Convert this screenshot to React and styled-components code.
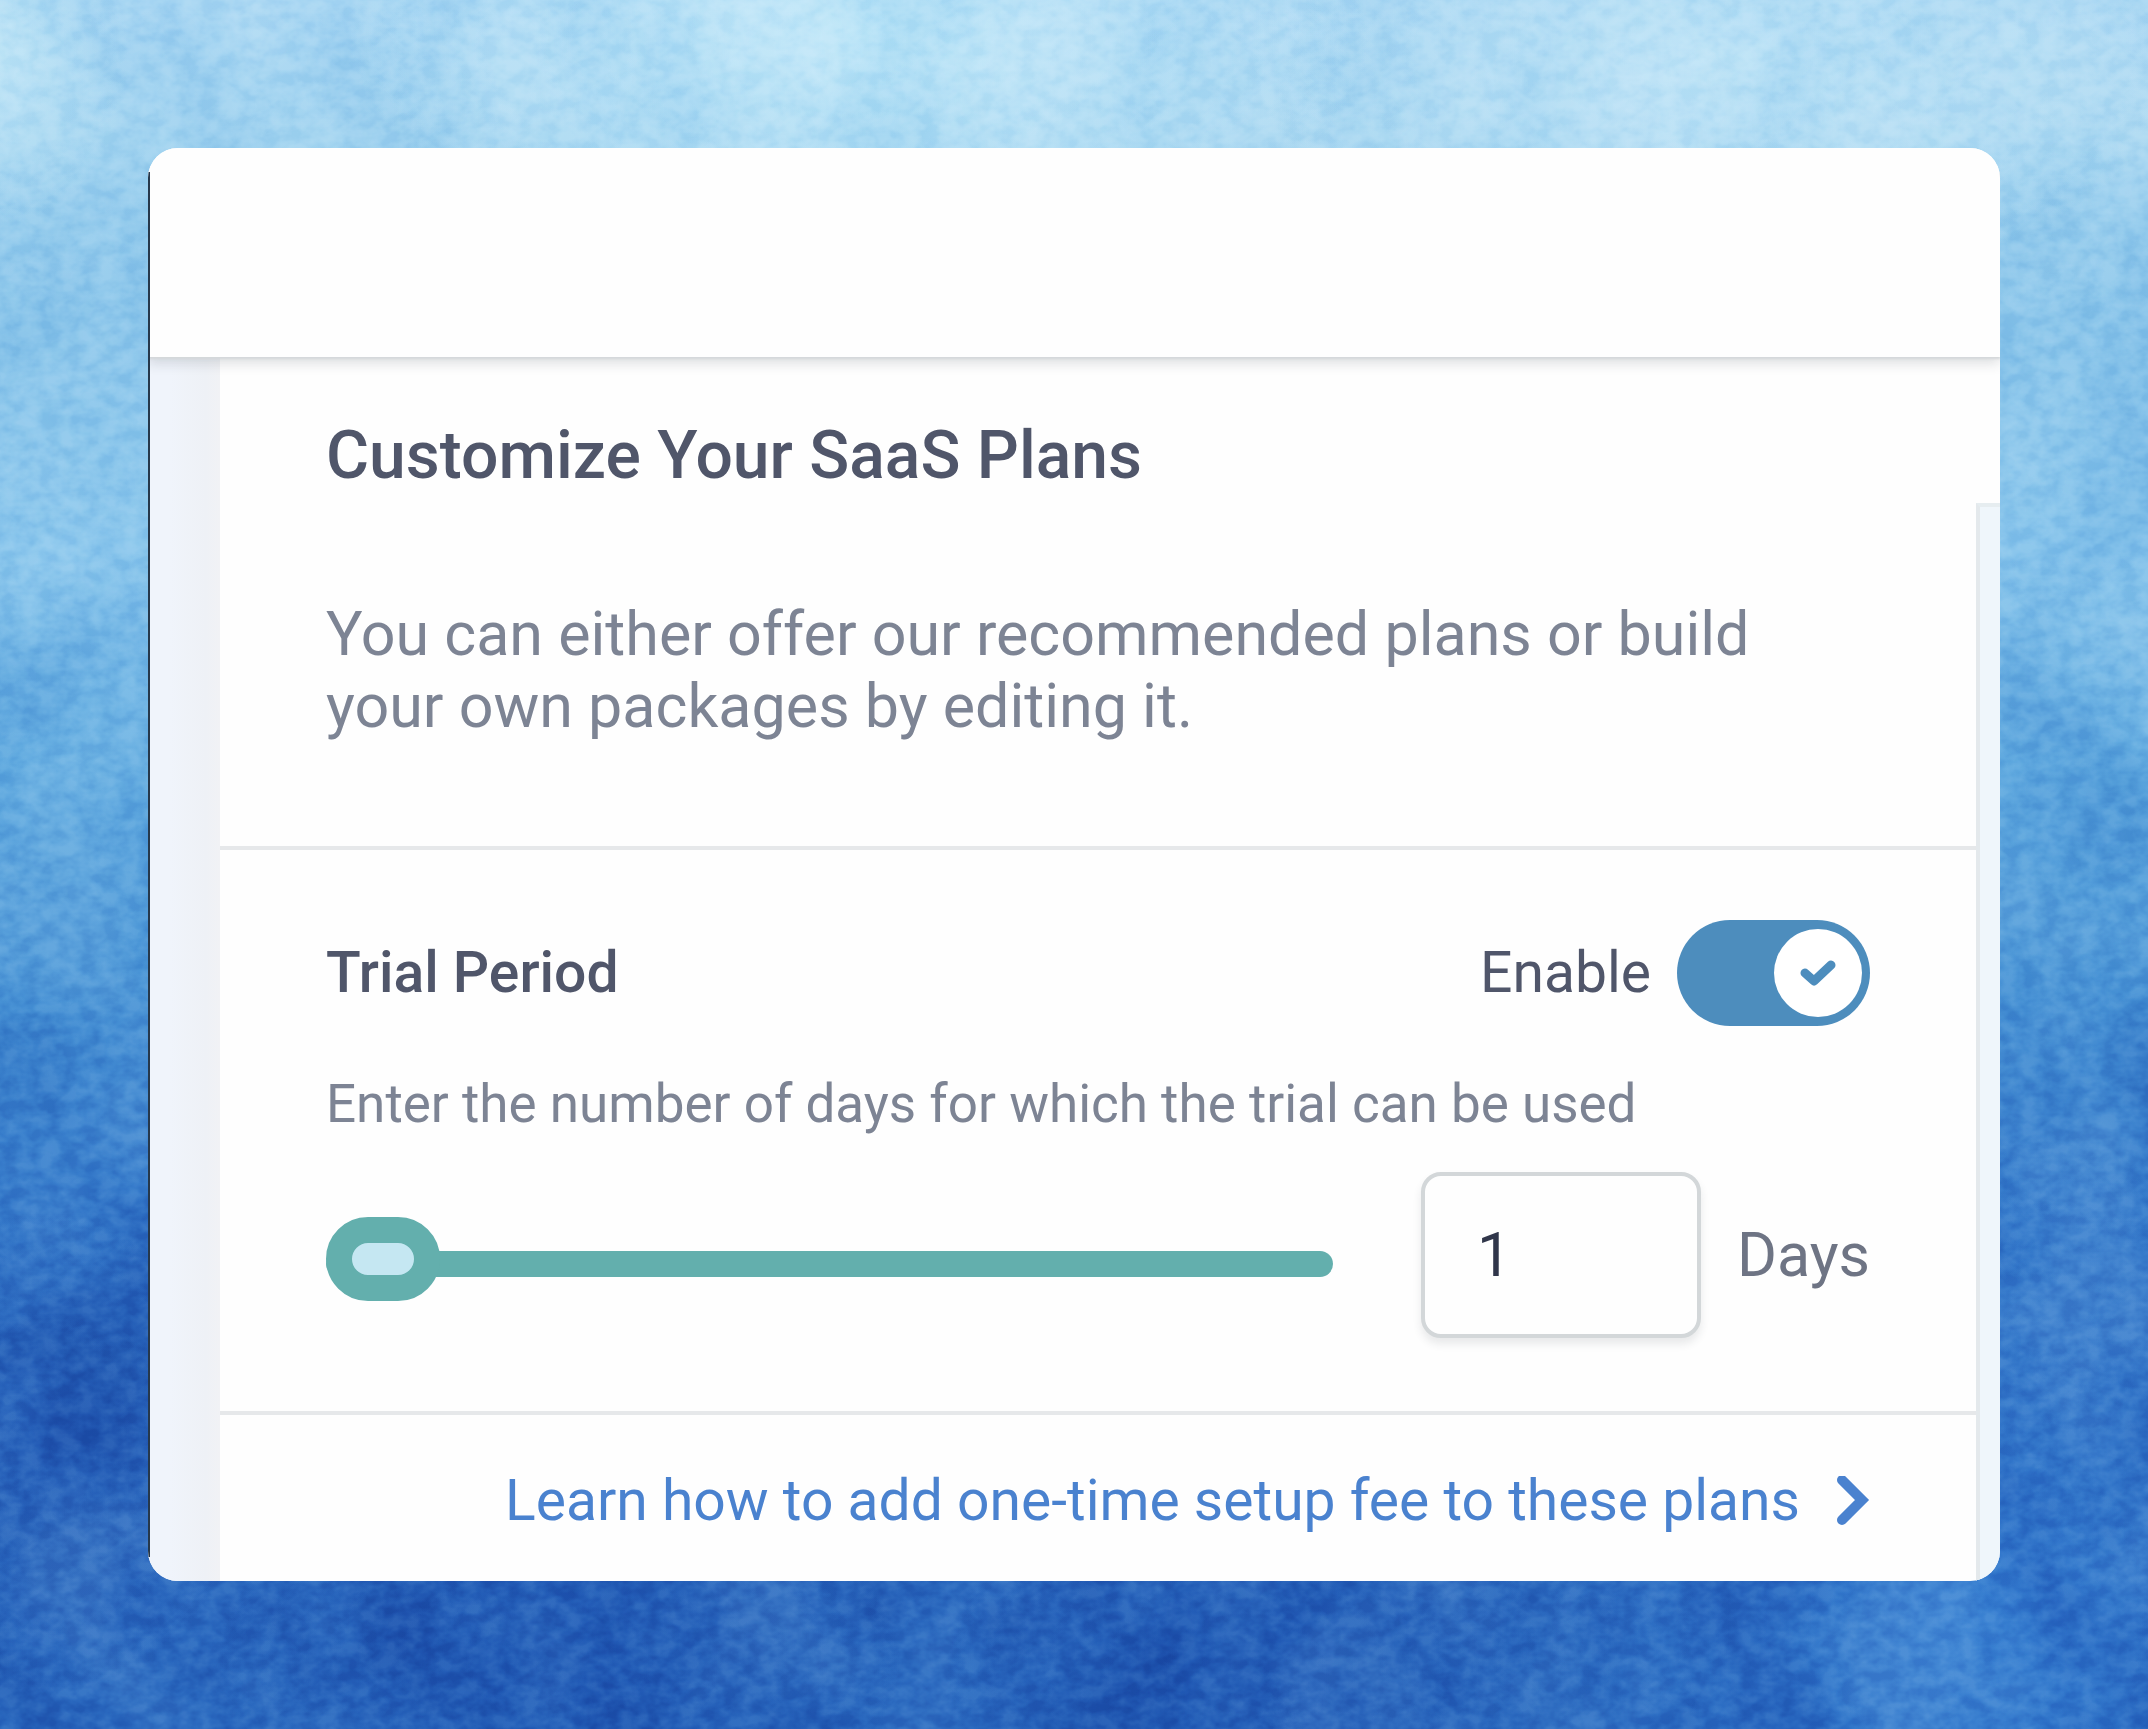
import React, { useState } from 'react';
import styled, { createGlobalStyle } from 'styled-components';

const GlobalStyle = createGlobalStyle`
  *, *::before, *::after {
    box-sizing: border-box;
  }

  body {
    margin: 0;
    font-family: Roboto, 'Liberation Sans', sans-serif;
    color: #50566a;
  }

  h1, h2, p {
    margin: 0;
  }
`;

// Backdrop
const Page = styled.div`
  position: relative;
  isolation: isolate;
  min-height: 100vh;
  padding: 148px 148px 149px;
  background:
    radial-gradient(ellipse 24% 14% at 40% 2%, rgba(196, 234, 249, 0.8), transparent),
    radial-gradient(ellipse 22% 14% at 80% 3%, rgba(192, 229, 247, 0.8), transparent),
    radial-gradient(ellipse 6% 10% at 0% 3%, rgba(190, 229, 246, 0.8), transparent),
    radial-gradient(ellipse 10% 14% at 2% 84%, rgba(30, 82, 176, 0.4), transparent),
    radial-gradient(ellipse 16% 12% at 26% 96%, rgba(28, 82, 176, 0.7), transparent),
    radial-gradient(ellipse 14% 14% at 58% 97%, rgba(28, 82, 176, 0.7), transparent),
    radial-gradient(ellipse 20% 30% at 92% 94%, rgba(56, 130, 212, 0.8), transparent),
    linear-gradient(#a6d5f2 0%, #a3d4f0 8%, #8ac5ea 18%, #8ac6ec 32%, #62abe0 44%, #4893d5 56%, #3478c9 70%, #2b68be 83%, #2a69bf 100%);
`;

const Paint = styled.svg`
  position: absolute;
  inset: 0;
  z-index: -1;
  width: 100%;
  height: 100%;
  mix-blend-mode: soft-light;
`;

// Window
const Window = styled.div`
  position: relative;
  border-radius: 30px;
  overflow: hidden;
  background: #fefefe;

  &::before {
    content: '';
    position: absolute;
    top: 24px;
    bottom: 24px;
    left: 0;
    z-index: 1;
    width: 2px;
    background: #26384b;
  }
`;

const Header = styled.header`
  position: relative;
  height: 209px;
  background: #fefefe;
  box-shadow: 0 2px 2px #d5d8da, 0 6px 12px rgba(40, 50, 60, 0.16);
`;

const Body = styled.div`
  display: grid;
  grid-template-columns: 72px 1fr 24px;
`;

const Gutter = styled.div`
  background: linear-gradient(90deg, #f0f4fb 30%, #eef1f6 80%, #f1f2f5);
`;

const Aside = styled.aside`
  margin-top: 146px;
  border-top: 4px solid #e6edf0;
  border-left: 4px solid #e4e9ec;
  background: #eff6fb;
`;

const Section = styled.section`
  padding: ${({ $pad }) => $pad};
  border-bottom: ${({ $last }) => ($last ? 'none' : '4px solid #e6e8ea')};
`;

const Title = styled.h1`
  margin-bottom: 106px;
  font-size: 66px;
  line-height: 72px;
  font-weight: 500;
`;

const Lead = styled.p`
  font-size: 61px;
  line-height: 72px;
  color: #7d8494;
`;

const Row = styled.div`
  display: flex;
  align-items: center;
  justify-content: space-between;
`;

const Subtitle = styled.h2`
  font-size: 57px;
  line-height: 72px;
  font-weight: 500;
`;

const SwitchLabel = styled.label`
  display: flex;
  align-items: center;
  gap: 26px;
  font-size: 57px;
  line-height: 72px;
`;

const SwitchBox = styled.span`
  display: grid;
  align-items: center;
  width: 193px;
  height: 106px;

  > * {
    grid-area: 1 / 1;
  }
`;

const SwitchInput = styled.input`
  appearance: none;
  width: 100%;
  height: 100%;
  margin: 0;
  border-radius: 53px;
  background: #a9b3bd;
  cursor: pointer;

  &:checked {
    background: #4d8dbd;
  }
`;

const Knob = styled.span`
  display: flex;
  align-items: center;
  justify-content: center;
  justify-self: ${({ $on }) => ($on ? 'end' : 'start')};
  width: 88px;
  height: 88px;
  margin: 0 8px;
  border-radius: 50%;
  background: #fff;
  pointer-events: none;
`;

const Hint = styled.p`
  margin-top: 42px;
  font-size: 53px;
  line-height: 72px;
  color: #7d8494;
`;

const SliderRow = styled.div`
  display: flex;
  align-items: center;
  margin-top: 32px;
`;

const Slider = styled.input`
  appearance: none;
  flex: 1;
  min-width: 0;
  height: 84px;
  margin: 18px 0 0;
  background: transparent;

  &::-webkit-slider-runnable-track {
    height: 26px;
    border-radius: 13px;
    background: #63afad;
  }

  &::-webkit-slider-thumb {
    appearance: none;
    width: 114px;
    height: 84px;
    margin-top: -34px;
    border: 26px solid #63afad;
    border-radius: 42px;
    background: #c5e7f2;
  }
`;

const DaysInput = styled.input`
  width: 280px;
  height: 166px;
  margin: 0 36px 0 88px;
  padding: 0 52px;
  border: 4px solid #d3d7d9;
  border-radius: 20px;
  font: inherit;
  font-size: 61px;
  color: #30364a;
  background: #fefefe;
  box-shadow: 0 6px 8px rgba(40, 50, 60, 0.1);
`;

const DaysLabel = styled.label`
  font-size: 61px;
  line-height: 72px;
  color: #6e7484;
`;

const LearnLink = styled.a`
  display: flex;
  align-items: center;
  justify-content: flex-end;
  gap: 36px;
  font-size: 57px;
  line-height: 72px;
  color: #4a82cf;
  text-decoration: none;
`;

// Broad brush strokes with a fine grain over them
const Backdrop = () => (
  <>
    <Paint aria-hidden="true">
      <filter id="strokes" x="0" y="0" width="100%" height="100%" colorInterpolationFilters="sRGB">
        <feTurbulence type="fractalNoise" baseFrequency="0.006 0.005" numOctaves="6" seed="21" />
        <feColorMatrix values="2.4 0 0 0 -0.7  2.4 0 0 0 -0.7  2.4 0 0 0 -0.7  0 0 0 0 1" />
      </filter>
      <rect width="100%" height="100%" filter="url(#strokes)" opacity="0.2" />
    </Paint>
    <Paint aria-hidden="true">
      <filter id="grain" x="0" y="0" width="100%" height="100%" colorInterpolationFilters="sRGB">
        <feTurbulence type="fractalNoise" baseFrequency="0.05 0.07" numOctaves="3" seed="4" />
        <feColorMatrix values="2.2 0 0 0 -0.6  2.2 0 0 0 -0.6  2.2 0 0 0 -0.6  0 0 0 0 1" />
      </filter>
      <rect width="100%" height="100%" filter="url(#grain)" opacity="0.2" />
    </Paint>
  </>
);

const CheckIcon = () => (
  <svg width="36" height="28" viewBox="0 0 36 28" fill="none" aria-hidden="true">
    <path d="M5 14 L14 22 L31 6" stroke="#4d8dbd" strokeWidth="9" strokeLinecap="round" strokeLinejoin="round" />
  </svg>
);

const ChevronIcon = () => (
  <svg width="34" height="50" viewBox="0 0 34 50" fill="none" aria-hidden="true">
    <path d="M6 4 L26 24 L6 44" stroke="#4a82cf" strokeWidth="10" strokeLinecap="round" />
  </svg>
);

const App = () => {
  const [enabled, setEnabled] = useState(true);
  const [days, setDays] = useState(1);

  const changeDays = (e) => setDays(Number(e.target.value));

  return (
    <Page>
      <GlobalStyle />
      <Backdrop />
      <Window>
        <Header />
        <Body>
          <Gutter />
          <main>
            <Section $pad="63px 106px 104px">
              <Title>Customize Your SaaS Plans</Title>
              <Lead>You can either offer our recommended plans or build your own packages by editing it.</Lead>
            </Section>
            <Section $pad="70px 106px 73px">
              <Row>
                <Subtitle>Trial Period</Subtitle>
                <SwitchLabel>
                  Enable
                  <SwitchBox>
                    <SwitchInput type="checkbox" checked={enabled} onChange={() => setEnabled(!enabled)} />
                    <Knob $on={enabled}>{enabled && <CheckIcon />}</Knob>
                  </SwitchBox>
                </SwitchLabel>
              </Row>
              <Hint id="trial-hint">Enter the number of days for which the trial can be used</Hint>
              <SliderRow>
                <Slider
                  type="range"
                  min={1}
                  max={365}
                  value={days}
                  onChange={changeDays}
                  aria-labelledby="trial-hint"
                />
                <DaysInput id="days" type="text" inputMode="numeric" value={days} onChange={changeDays} />
                <DaysLabel htmlFor="days">Days</DaysLabel>
              </SliderRow>
            </Section>
            <Section $pad="50px 106px 44px" $last>
              <LearnLink href="#setup-fee">
                Learn how to add one-time setup fee to these plans
                <ChevronIcon />
              </LearnLink>
            </Section>
          </main>
          <Aside />
        </Body>
      </Window>
    </Page>
  );
};

export default App;
